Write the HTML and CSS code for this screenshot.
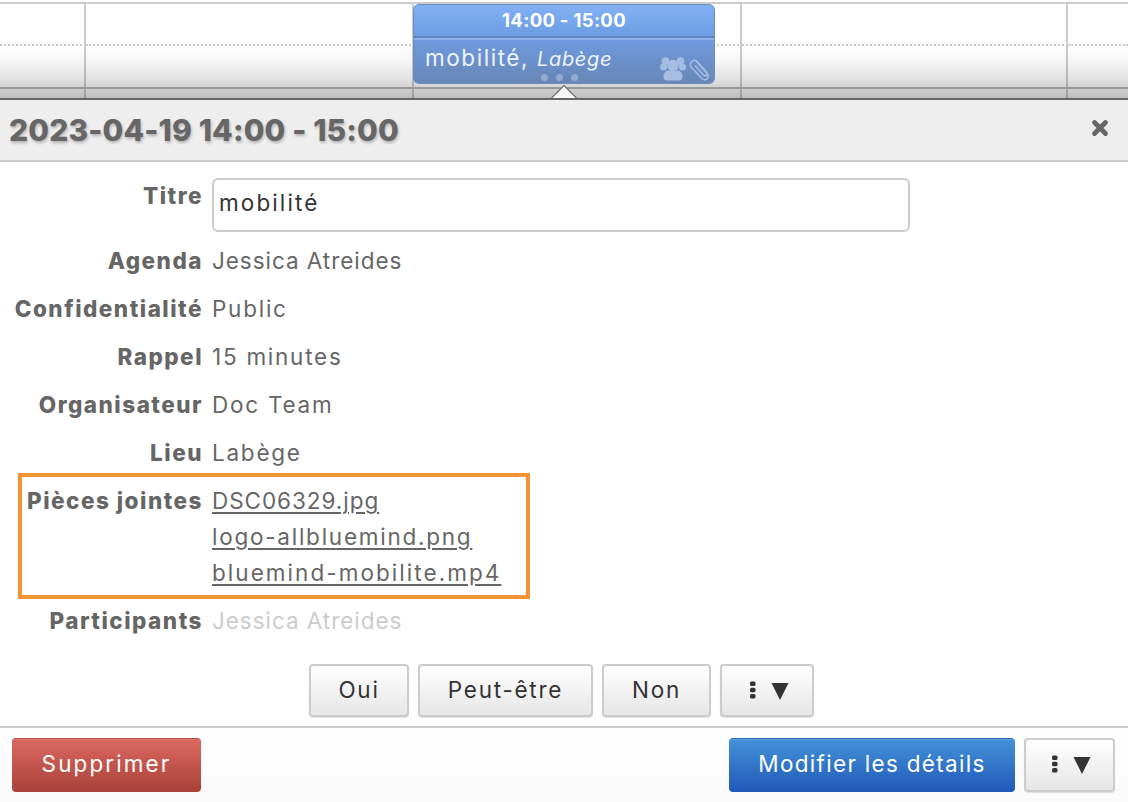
FILE: index.html
```html
<!DOCTYPE html>
<html lang="fr">
<head>
<meta charset="utf-8">
<title>mobilité</title>
<link rel="stylesheet" href="styles.css">
</head>
<body>
<div class="app">
  <section class="calendar">
    <div class="grid">
      <div class="cell"></div><div class="cell"></div><div class="cell"></div><div class="cell"></div><div class="cell"></div>
      <div class="cell half"></div><div class="cell half"></div><div class="cell half"></div><div class="cell half"></div><div class="cell half"></div>
      <div class="cell foot"></div><div class="cell foot"></div><div class="cell foot"></div><div class="cell foot"></div><div class="cell foot"></div>
    </div>
    <div class="shade"></div>
    <div class="event">
      <div class="event-time">14:00 - 15:00</div>
      <div class="event-body">mobilité, <em>Labège</em></div>
      <div class="event-dots"><i></i><i></i><i></i></div>
      <svg class="event-icons" width="49" height="24" viewBox="0 0 49 24">
        <g fill="#a6bde2">
          <circle cx="5.500" cy="4" r="3.800"/><circle cx="20.500" cy="4" r="3.800"/>
          <circle cx="3.500" cy="10" r="3.500"/><circle cx="22.500" cy="10" r="3.500"/>
          <circle cx="13" cy="8.500" r="5.800"/>
          <path d="M3.500 20c0-4 2-6.500 5-6.500h9c3 0 5 2.500 5 6.500 0 2-1 3.500-3 3.500H6.500c-2 0-3-1.500-3-3.500z"/>
        </g>
        <path d="M36.500 4.500l11 12.500c1.800 2 .2 5.200-2 5.700-1.500.3-2.800-.3-3.800-1.400L31.500 10.500c-1.700-2-1.400-4.400.3-6 1.800-1.600 4.200-1.300 5.800.4l9 10.300c.9 1 .8 2.300-.1 3.100-.9.800-2.200.6-3-.3L35.500 9" fill="none" stroke="#a6bde2" stroke-width="1.500" stroke-linecap="round"/>
      </svg>
    </div>
    <div class="pointer"></div>
  </section>

  <section class="panel">
    <header class="panel-head">
      <h1>2023-04-19 14:00 - 15:00</h1>
      <svg class="close" width="18" height="18" viewBox="0 0 18 18" aria-label="Fermer"><path d="M3.500 3.500l11 11M14.500 3.500l-11 11" stroke="#666" stroke-width="4.800" stroke-linecap="round"/></svg>
    </header>

    <div class="form">
      <div class="row row-title">
        <div class="label">Titre</div>
        <div class="input">mobilité</div>
      </div>
      <div class="row"><div class="label">Agenda</div><div class="value tight">Jessica Atreides</div></div>
      <div class="row"><div class="label">Confidentialité</div><div class="value">Public</div></div>
      <div class="row"><div class="label">Rappel</div><div class="value">15 minutes</div></div>
      <div class="row"><div class="label">Organisateur</div><div class="value">Doc Team</div></div>
      <div class="row"><div class="label">Lieu</div><div class="value">Labège</div></div>
      <div class="row row-files">
        <div class="label">Pièces jointes</div>
        <div class="files">
          <a class="tight" href="#">DSC06329.jpg</a>
          <a href="#">logo-allbluemind.png</a>
          <a class="wide" href="#">bluemind-mobilite.mp4</a>
        </div>
      </div>
      <div class="row"><div class="label">Participants</div><div class="value muted tight">Jessica Atreides</div></div>
    </div>

    <div class="answers">
      <button class="btn btn-oui">Oui</button>
      <button class="btn btn-peut">Peut-être</button>
      <button class="btn btn-non">Non</button>
      <button class="btn btn-more">
        <svg width="8" height="20" viewBox="0 0 8 20"><rect x="1" y="1.500" width="5.500" height="4.500" rx="1.500" fill="#333"/><rect x="1" y="7.800" width="5.500" height="4.500" rx="1.500" fill="#333"/><rect x="1" y="14" width="5.500" height="4.500" rx="1.500" fill="#333"/></svg>
        <svg class="tri" width="18" height="17" viewBox="0 0 18 17"><path d="M.5 0h17L9 17z" fill="#333"/></svg>
      </button>
    </div>

    <footer class="panel-foot">
      <button class="btn btn-danger">Supprimer</button>
      <div class="foot-right">
        <button class="btn btn-primary">Modifier les détails</button>
        <button class="btn btn-more btn-more-foot">
          <svg width="8" height="20" viewBox="0 0 8 20"><rect x="1" y="1.500" width="5.500" height="4.500" rx="1.500" fill="#333"/><rect x="1" y="7.800" width="5.500" height="4.500" rx="1.500" fill="#333"/><rect x="1" y="14" width="5.500" height="4.500" rx="1.500" fill="#333"/></svg>
          <svg class="tri" width="18" height="17" viewBox="0 0 18 17"><path d="M.5 0h17L9 17z" fill="#333"/></svg>
        </button>
      </div>
    </footer>
  </section>
</div>
</body>
</html>
```

FILE: styles.css
```css
* { box-sizing: border-box; }

html, body { margin: 0; padding: 0; }

body {
  width: 1128px;
  height: 802px;
  overflow: hidden;
  background: #fff;
  font-family: Inter, "Noto Sans", "Liberation Sans", sans-serif;
  font-size: 22.500px;
  color: #666;
  letter-spacing: 1.750px;
}

.app { display: flex; flex-direction: column; height: 802px; }

/* calendar strip */
.calendar { position: relative; height: 98px; overflow: hidden; background: #fff; }

.grid {
  display: grid;
  grid-template-columns: 86px 328px 328px 326px 60px;
  grid-template-rows: 42px 43px 13px;
  padding-top: 2px;
  height: 100px;
}

.cell { border-top: 2px solid #ccc; border-right: 2px solid #ccc; }
.cell:nth-child(5n) { border-right: 0; }
.cell.half { border-top: 2px dotted #ccc; }
.cell.foot { border-top: 2px solid #bbb; }

.shade {
  position: absolute;
  left: 0; right: 0; top: 46px; bottom: 0;
  background: linear-gradient(to bottom, rgba(0,0,0,0) 0, rgba(0,0,0,.04) 30%, rgba(0,0,0,.12) 65%, rgba(0,0,0,.26) 100%);
  pointer-events: none;
}

.event {
  position: absolute;
  left: 413px; top: 4px;
  width: 302px; height: 80px;
  border-radius: 6px;
  border: 1px solid #6c8cbc;
  background: linear-gradient(to bottom, #82b1f5 0, #6a9ae0 34px, #6f9ade 36px, #6786b6 100%);
  color: #fff;
  overflow: hidden;
}

.event-time {
  height: 33px;
  line-height: 30px;
  text-align: center;
  font-size: 18.500px;
  font-weight: 700;
  letter-spacing: 0.300px;
  border-bottom: 2px solid #5f87c4;
}

.event-body {
  border-top: 2px solid #8fb0e8;
  padding-left: 11px;
  line-height: 36px;
  letter-spacing: 1.550px;
  color: #eef3fb;
}
.event-body em { font-size: 20px; font-style: italic; letter-spacing: 0.700px; }

.event-dots {
  position: absolute;
  left: 127px; bottom: 2px;
  display: flex; gap: 8px;
}
.event-dots i { width: 7px; height: 7px; border-radius: 50%; background: #94abd0; }

.event-icons { position: absolute; right: 5px; bottom: 2px; }

.pointer {
  position: absolute;
  left: 554px; top: 89px;
  width: 20px; height: 20px;
  background: #f9f9f9;
  border: 1px solid #555;
  transform: rotate(45deg);
}

/* panel */
.panel { flex: 1; display: flex; flex-direction: column; min-height: 0; background: #fff; border-top: 2px solid #666; }

.panel-head {
  height: 62px;
  display: flex;
  align-items: center;
  justify-content: space-between;
  padding: 0 19px 0 9px;
  background: #eee;
  border-bottom: 2px solid #ccc;
}

.panel-head h1 {
  margin: 0;
  font-size: 30px;
  font-weight: 800;
  letter-spacing: 0.150px;
  color: #666;
  text-shadow: 1px 2px 3px rgba(0,0,0,.25);
}

.close { flex: none; margin-bottom: 4px; }

.form { padding-top: 17px; display: flex; flex-direction: column; }

.row { display: flex; gap: 9px; height: 48px; line-height: 38px; }
.row-title { height: 64px; margin-top: -1px; line-height: 36px; }

.label {
  width: 203px;
  text-align: right;
  font-weight: 800;
  color: #666;
  letter-spacing: 1.500px;
  flex: none;
}

.input {
  width: 698px; height: 54px;
  padding: 0 5px;
  line-height: 46px;
  border: 2px solid #ccc;
  border-radius: 6px;
  color: #333;
  letter-spacing: 2.100px;
}

.value { color: #666; white-space: nowrap; }
.muted { color: #ccc; }
.tight { letter-spacing: 0.950px; }
.wide { letter-spacing: 2.050px; }

.row-files {
  height: 126px;
  padding-top: 6px;
  margin: -9px 0 3px 18px;
  width: 512px;
  border: 4px solid #f39435;
  line-height: 36px;
}
.row-files .label { width: 181px; }

.files { display: flex; flex-direction: column; }
.files a { color: #666; line-height: 36px; text-decoration: underline; text-underline-offset: 3px; white-space: nowrap; }

.btn {
  font: inherit;
  letter-spacing: 1.750px;
  height: 53px;
  padding: 0 0 2px;
  border: 2px solid #ccc;
  border-radius: 4px;
  color: #333;
  background: linear-gradient(to bottom, #fff, #e6e6e6);
  box-shadow: 0 1px 1px rgba(0,0,0,.12);
  display: inline-flex;
  align-items: center;
  justify-content: center;
  gap: 14px;
}

.tri { margin-top: 3px; }

.answers { display: flex; gap: 9px; padding: 14px 0 0 309px; height: 78px; border-bottom: 2px solid #ccc; }
.btn-oui { width: 100px; }
.btn-peut { width: 175px; }
.btn-non { width: 109px; }
.btn-more { width: 94px; padding-left: 3px; }
.btn-more-foot { width: 91px; height: 54px; }

.panel-foot {
  flex: 1;
  display: flex;
  justify-content: space-between;
  align-items: flex-start;
  padding: 10px 13px 0 12px;
  background: linear-gradient(to bottom, #fff, #fafafa);
}

.foot-right { display: flex; gap: 9px; }

.btn-danger {
  width: 189px;
  height: 54px;
  padding-bottom: 4px;
  border: 0;
  color: #fff;
  letter-spacing: 2.100px;
  background: linear-gradient(to bottom, #dc6860, #a8423a);
  border-top: 1px solid #b04b43;
  box-shadow: inset 0 1px 0 rgba(255,255,255,.12);
}

.btn-primary {
  width: 286px;
  height: 54px;
  padding-bottom: 4px;
  border: 0;
  color: #fff;
  letter-spacing: 1.300px;
  background: linear-gradient(to bottom, #4493d8, #2058b8);
  border-top: 1px solid #2a68b8;
  box-shadow: inset 0 1px 0 rgba(255,255,255,.12);
}
```
